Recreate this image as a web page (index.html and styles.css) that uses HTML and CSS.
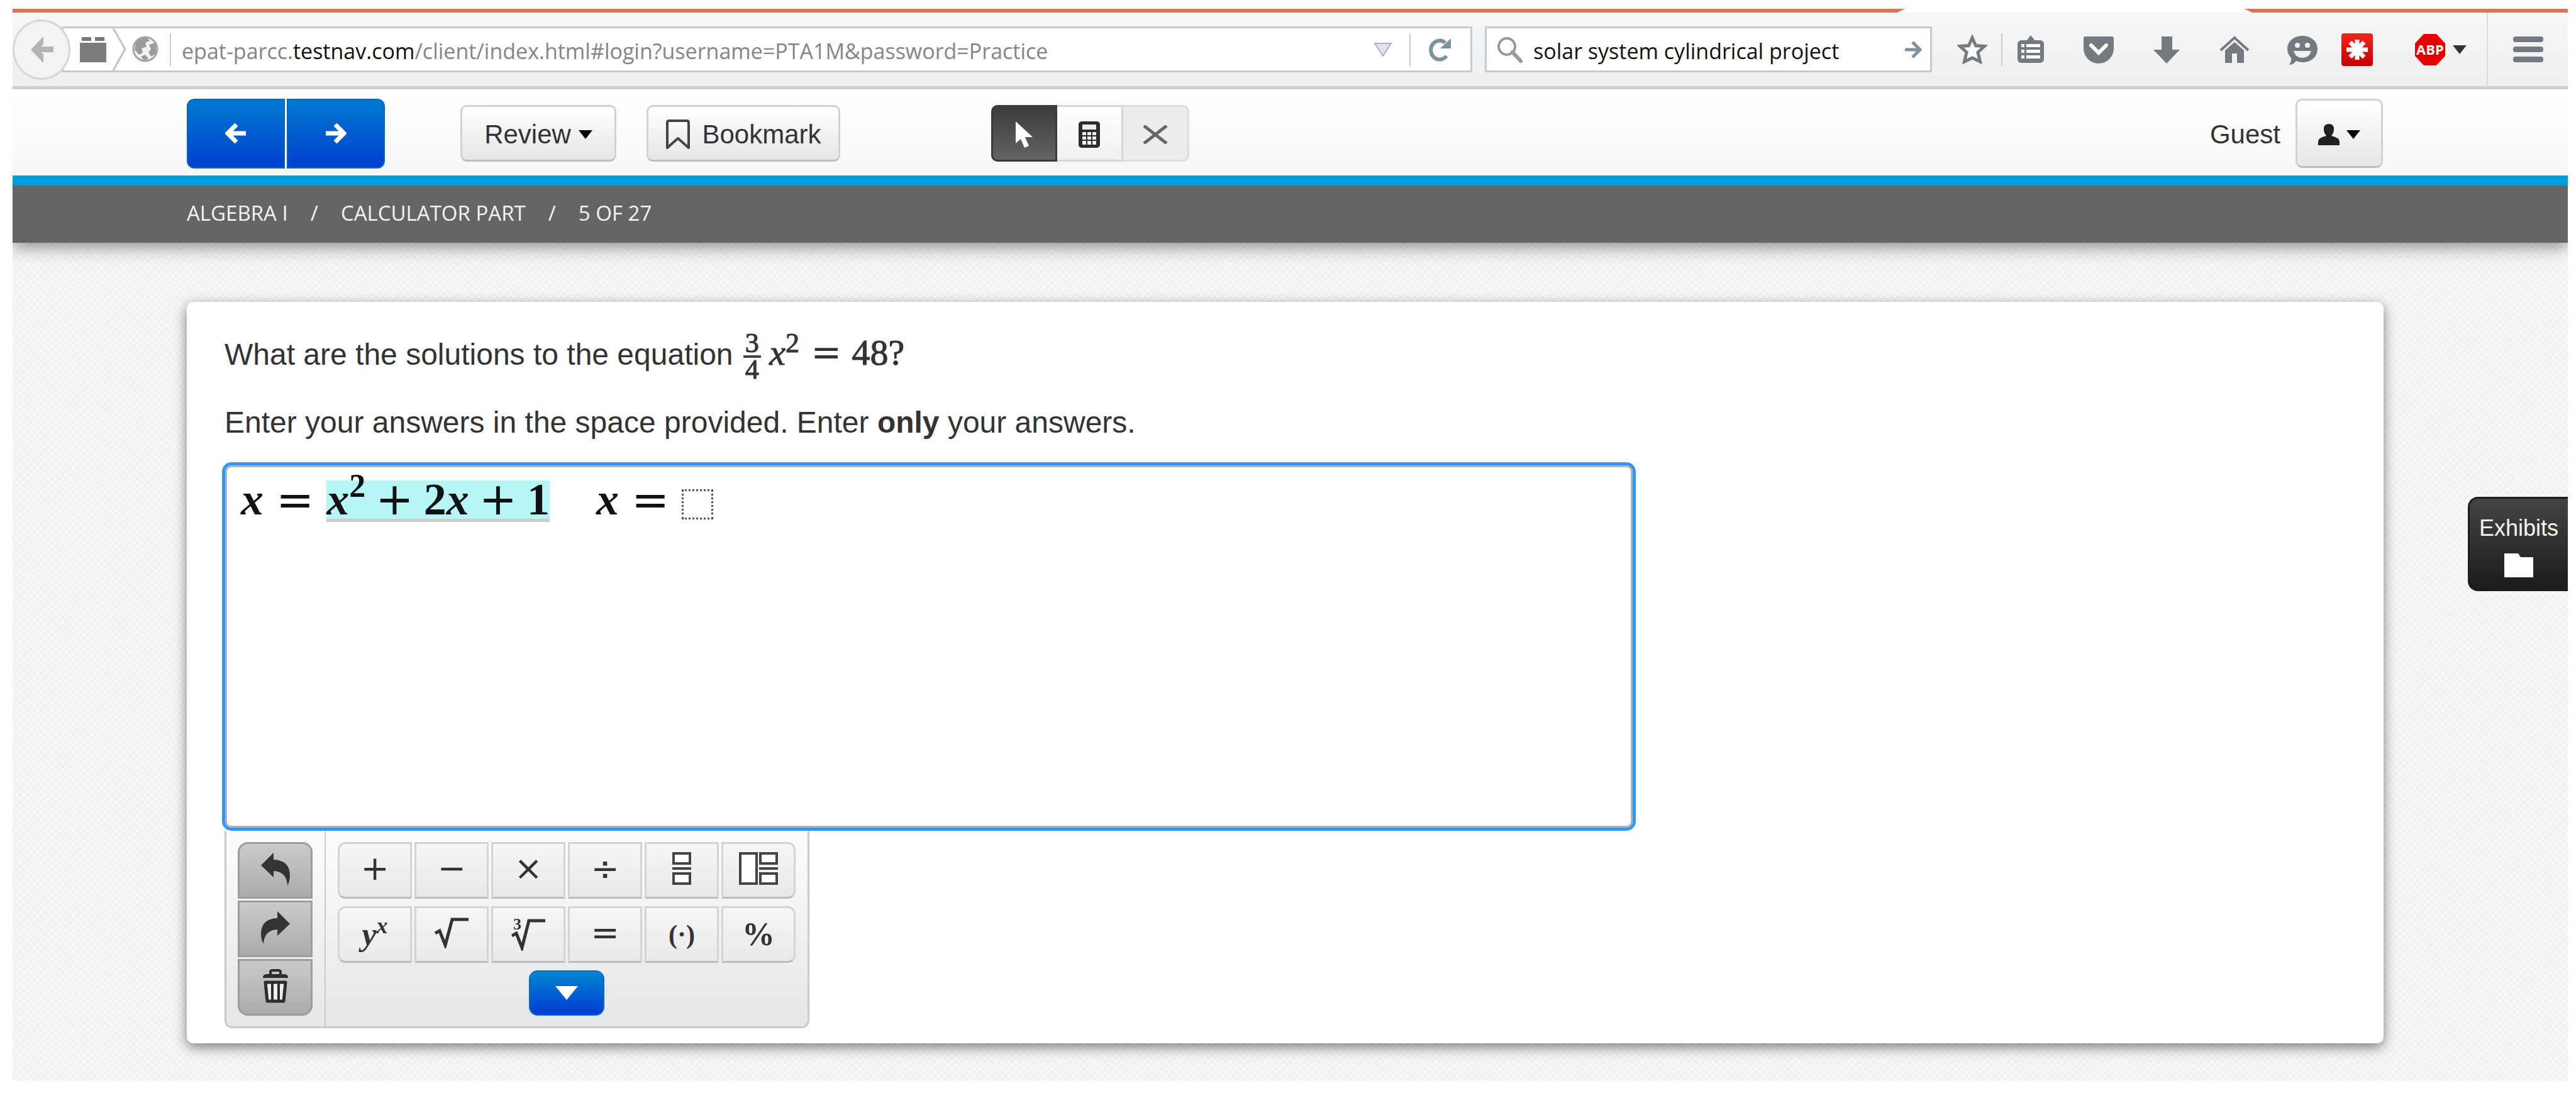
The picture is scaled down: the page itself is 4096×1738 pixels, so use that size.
FILE: index.html
```html
<!DOCTYPE html>
<html lang="en">
<head>
<meta charset="utf-8">
<meta name="viewport" content="width=device-width, initial-scale=1">
<title>Algebra I - Calculator Part</title>
<link rel="stylesheet" href="styles.css">
</head>
<body>
<div class="frame">
  <div class="tabstrip"><span class="tab-edge tab-edge-left"></span><span class="tab-edge tab-edge-right"></span></div>

  <div class="chrome">
    <button class="back" type="button" aria-label="Back">
      <svg width="42" height="46" viewBox="0 0 42 46"><path d="M24 2 L4 23 L24 44 V30 L20 27 H40 V18 H20 L24 15 Z" fill="#b4b4b4"/></svg>
    </button>
    <div class="urlbar">
      <svg class="brick" width="42" height="40" viewBox="0 0 42 40"><path d="M3 0h15v6H3zM24 0h15v6H24z" fill="#777"/><path d="M0 9h42v31H0z" fill="#7c7c7c"/></svg>
      <svg class="chevron" width="22" height="67" viewBox="0 0 22 67"><path d="M1 0 L20 33 L1 67" fill="none" stroke="#bfc3c8" stroke-width="3"/></svg>
      <svg class="globe" width="43" height="43" viewBox="0 0 43 43"><circle cx="21" cy="21" r="19" fill="#f2f2f2" stroke="#a4a4a4" stroke-width="3"/><path d="M6 10 Q14 2 24 3 L28 8 L21 11 L23 17 L15 20 L17 27 L11 30 L4 22 Z M27 14 L36 11 Q40 20 37 29 L30 33 L26 26 L30 21 Z M14 33 L21 30 L26 36 L20 40 Z" fill="#9b9b9b"/></svg>
      <span class="rule"></span>
      <div class="url" role="textbox" aria-label="Address" contenteditable="true" spellcheck="false">epat-parcc.<span class="domain">testnav.com</span>/client/index.html#login?username=PTA1M&amp;password=Practice</div>
      <svg class="history" width="30" height="22" viewBox="0 0 30 22"><path d="M2 1h26L15 21z" fill="#dde4ea" stroke="#aab4be" stroke-width="2"/></svg>
      <span class="rule"></span>
      <button class="bare reload" type="button" aria-label="Reload">
        <svg width="36" height="38" viewBox="0 0 36 38"><path d="M28 29 A14 15 0 1 1 26 8" fill="none" stroke="#7d929f" stroke-width="6"/><path d="M35 1 V17 H18 Z" fill="#7d929f"/></svg>
      </button>
    </div>
    <form class="search">
      <label for="q"><svg width="42" height="42" viewBox="0 0 42 42"><circle cx="16" cy="16" r="13" fill="none" stroke="#999" stroke-width="4"/><path d="M25 25 L38 39" stroke="#999" stroke-width="6" stroke-linecap="round"/></svg></label>
      <input id="q" type="text" aria-label="Search" value="solar system cylindrical project">
      <button class="bare" type="button" aria-label="Go"><svg width="28" height="30" viewBox="0 0 28 30"><path d="M0 15 H22 M12 3 L24 15 L12 27" fill="none" stroke="#7d929f" stroke-width="5"/></svg></button>
    </form>

    <button class="bare star" type="button" aria-label="Bookmark page"><svg width="48" height="48" viewBox="0 0 48 48"><path d="M24 5 L29.500 17.500 L43.500 18.500 L33 28 L36.500 43 L24 37 L11.500 43 L15 28 L4.500 18.500 L18.500 17.500 Z" fill="#fbfbfb" stroke="#747a80" stroke-width="5"/></svg></button>
    <span class="rule rule-star"></span>
    <div class="tools">
      <button class="bare" type="button" aria-label="Bookmarks list"><svg width="48" height="48" viewBox="0 0 48 48"><path d="M17 10 L24 1 L31 10 Z" fill="#747a80"/><rect x="3" y="9" width="42" height="36" rx="6" fill="#747a80"/><path d="M9 15h5v5H9zM17 15h22v5H17zM9 24h5v5H9zM17 24h22v5H17zM9 33h5v5H9zM17 33h22v5H17z" fill="#fff"/></svg></button>
      <button class="bare" type="button" aria-label="Pocket"><svg width="48" height="48" viewBox="0 0 48 48"><path d="M3 3 H45 Q48 3 48 6 V22 A24 24 0 0 1 0 22 V6 Q0 3 3 3 Z" fill="#747a80"/><path d="M12 17 L24 29 L36 17" fill="none" stroke="#fff" stroke-width="6" stroke-linecap="round"/></svg></button>
      <button class="bare" type="button" aria-label="Downloads"><svg width="48" height="48" viewBox="0 0 48 48"><path d="M16 3 H33 V24 H45 L24 46 L3 24 H16 Z" fill="#747a80"/></svg></button>
      <button class="bare" type="button" aria-label="Home"><svg width="48" height="48" viewBox="0 0 48 48"><path d="M2 25 L24 5 L46 25" fill="none" stroke="#747a80" stroke-width="4"/><path d="M9 25 L24 12 L39 25 V45 H28 V30 H20 V45 H9 Z" fill="#747a80"/></svg></button>
      <button class="bare" type="button" aria-label="Hello"><svg width="48" height="48" viewBox="0 0 48 48"><path d="M24 2 C38 2 48 11 48 23 C48 35 38 44 25 44 C21 44 17 43 14 42 Q9 48 3 48 Q7 43 6 37 C2 33 0 28 0 23 C0 11 10 2 24 2 Z" fill="#747a80"/><circle cx="16" cy="17" r="4" fill="#f2f2f2"/><circle cx="32" cy="17" r="4" fill="#f2f2f2"/><path d="M10 26 H38 Q35 37 24 37 Q13 37 10 26 Z" fill="#f2f2f2"/></svg></button>
    </div>
    <button class="bare lastpass" type="button" aria-label="Password manager"><svg width="50" height="52" viewBox="0 0 50 52"><defs><linearGradient id="lp" x1="0" y1="0" x2="0" y2="1"><stop offset="0" stop-color="#f4241c"/><stop offset="1" stop-color="#c60000"/></linearGradient></defs><rect width="50" height="52" rx="4" fill="url(#lp)"/><path d="M25 26 V10 M25 26 V42 M25 26 H8 M25 26 H42 M25 26 L14 14 M25 26 L36 14 M25 26 L14 38 M25 26 L36 38" fill="none" stroke="#fff" stroke-width="7"/></svg></button>
    <button class="bare adblock" type="button" aria-label="Adblock">
      <svg width="48" height="50" viewBox="0 0 48 50"><path d="M14 0 H34 L48 15 V35 L34 50 H14 L0 35 V15 Z" fill="#e60000"/><text x="24" y="33" text-anchor="middle" class="abp">ABP</text></svg>
      <svg width="22" height="14" viewBox="0 0 22 14"><path d="M0 0h22L11 14z" fill="#333"/></svg>
    </button>
    <span class="rule rule-menu"></span>
    <button class="bare menu" type="button" aria-label="Menu"><svg width="48" height="42" viewBox="0 0 48 42"><rect width="48" height="9" rx="4" fill="#747a80"/><rect y="16" width="48" height="9" rx="4" fill="#747a80"/><rect y="32" width="48" height="9" rx="4" fill="#747a80"/></svg></button>
  </div>

  <header class="header">
    <div class="nav">
      <button type="button" aria-label="Previous"><svg width="34" height="32" viewBox="0 0 34 32"><path d="M33 16 H6 M18 2 L4 16 L18 30" fill="none" stroke="#fff" stroke-width="7"/></svg></button>
      <button type="button" aria-label="Next"><svg width="34" height="32" viewBox="0 0 34 32"><path d="M1 16 H28 M16 2 L30 16 L16 30" fill="none" stroke="#fff" stroke-width="7"/></svg></button>
    </div>
    <button class="btn review" type="button">Review <svg width="22" height="14" viewBox="0 0 22 14"><path d="M0 0h22L11 14z" fill="#000"/></svg></button>
    <button class="btn bookmark" type="button"><svg width="40" height="50" viewBox="0 0 40 50"><path d="M3 46 V6 Q3 3 6 3 H34 Q37 3 37 6 V46 L20 31 Z" fill="none" stroke="#444" stroke-width="4" stroke-linejoin="round"/></svg>Bookmark</button>
    <div class="toolset">
      <button class="on" type="button" aria-label="Pointer"><svg width="30" height="44" viewBox="0 0 30 44"><path d="M1 1 V36 L9 29 L15 43 L22 40 L16 26 H28 Z" fill="#fff"/></svg></button>
      <button type="button" aria-label="Calculator"><svg width="34" height="42" viewBox="0 0 34 42"><rect width="34" height="42" rx="5" fill="#2b2b2b"/><path d="M6 5h22v8H6zM6 17h6v5H6zM14 17h6v5H14zM22 17h6v5H22zM6 24h6v5H6zM14 24h6v5H14zM22 24h6v5H22zM6 31h6v6H6zM14 31h6v6H14zM22 31h6v6H22z" fill="#eee"/></svg></button>
      <button class="off" type="button" aria-label="Answer eliminator"><svg width="40" height="30" viewBox="0 0 40 30"><path d="M2 1 L38 29 M38 1 L2 29" stroke="#666" stroke-width="5"/></svg></button>
    </div>
    <span class="guest">Guest</span>
    <button class="btn user" type="button" aria-label="Account">
      <svg width="34" height="34" viewBox="0 0 34 34"><path d="M17 0 Q26 0 25 10 Q24 16 21 19 Q34 22 34 28 V34 H0 V28 Q0 22 13 19 Q10 16 9 10 Q8 0 17 0 Z" fill="#222"/></svg>
      <svg width="22" height="14" viewBox="0 0 22 14"><path d="M0 0h22L11 14z" fill="#000"/></svg>
    </button>
  </header>

  <nav class="crumbs" aria-label="Progress"><span>ALGEBRA I</span><span>/</span><span>CALCULATOR PART</span><span>/</span><span>5 OF 27</span></nav>

  <main class="workspace">
    <section class="card">
      <p class="question">What are the solutions to the equation <span class="frac"><span>3</span><span>4</span></span> <span class="math"><i>x</i><sup>2</sup> <span class="op">=</span> 48?</span></p>
      <p class="hint">Enter your answers in the space provided. Enter <b>only</b> your answers.</p>
      <div class="answer" role="textbox" aria-label="Answer" tabindex="0"><i>x</i><span class="op">=</span><span class="picked"><i>x</i><sup>2</sup><span class="op">+</span>2<i>x</i><span class="op">+</span>1</span><i class="next">x</i><span class="op">=</span><span class="slot"></span></div>
      <div class="keypad">
        <div class="edit">
          <button type="button" aria-label="Undo"><svg width="46" height="52" viewBox="0 0 46 52"><path d="M20 0 V11 Q46 12 46 36 Q46 45 42 52 Q41 30 20 29 V39 L0 20 Z" fill="#333"/></svg></button>
          <button type="button" aria-label="Redo"><svg width="46" height="52" viewBox="0 0 46 52"><path d="M26 0 V11 Q0 12 0 36 Q0 45 4 52 Q5 30 26 29 V39 L46 20 Z" fill="#333"/></svg></button>
          <button type="button" aria-label="Delete"><svg width="42" height="54" viewBox="0 0 42 54"><path d="M13 8 V5 Q13 2 16 2 H26 Q29 2 29 5 V8" fill="none" stroke="#2d2d2d" stroke-width="4"/><path d="M1 14 Q1 8 7 8 H35 Q41 8 41 14 Z" fill="#2d2d2d"/><path d="M5 21 H37 L34 51 H8 Z" fill="#eee" stroke="#2d2d2d" stroke-width="5" stroke-linejoin="round"/><path d="M16 22 V50 M26 22 V50" stroke="#2d2d2d" stroke-width="4"/></svg></button>
        </div>
        <div class="keys">
          <div class="row">
            <button type="button">+</button><button type="button">−</button><button type="button">×</button><button type="button">÷</button>
            <button type="button" aria-label="Fraction"><svg width="30" height="52" viewBox="0 0 30 52"><path d="M2 2h26v16H2zM2 34h26v16H2z" fill="#fff" stroke="#444" stroke-width="4"/><path d="M0 24h30v4H0z" fill="#444"/></svg></button>
            <button type="button" aria-label="Mixed number"><svg width="62" height="52" viewBox="0 0 62 52"><path d="M2 2h26v48H2zM34 2h26v16H34zM34 34h26v16H34z" fill="#fff" stroke="#444" stroke-width="4"/><path d="M32 24h30v4H32z" fill="#444"/></svg></button>
          </div>
          <div class="row">
            <button class="serif power" type="button"><i>y</i><sup><i>x</i></sup></button>
            <button type="button" aria-label="Square root"><svg width="54" height="50" viewBox="0 0 54 50"><path d="M1 26 L8 22 L17 45 L28 4 H54" fill="none" stroke="#333" stroke-width="5"/></svg></button>
            <button type="button" aria-label="Cube root"><svg width="54" height="58" viewBox="0 0 54 58"><path d="M1 34 L8 30 L17 53 L28 10 H54" fill="none" stroke="#333" stroke-width="5"/><text x="3" y="24" class="index">3</text></svg></button>
            <button type="button">=</button><button class="serif parens" type="button">(·)</button><button class="serif percent" type="button">%</button>
          </div>
          <button class="more" type="button" aria-label="More symbols"><svg width="36" height="22" viewBox="0 0 36 22"><path d="M0 0h36L18 22z" fill="#fff"/></svg></button>
        </div>
      </div>
    </section>
    <button class="exhibits" type="button">Exhibits<svg width="46" height="38" viewBox="0 0 46 38"><path d="M0 0 H22 L26 6 H46 V38 H0 Z" fill="#fff"/></svg></button>
  </main>
</div>
</body>
</html>
```
FILE: styles.css
```css
* { box-sizing: border-box; }

body {
  margin: 0;
  min-height: 100vh;
  display: flex;
  background: #fff;
  font-family: "Liberation Sans", Arial, sans-serif;
  color: #333;
}

svg { display: block; flex: none; }
button { font: inherit; color: inherit; cursor: pointer; }
p { margin: 0; }
sup { line-height: 0; }

.frame {
  flex: 1;
  display: flex;
  flex-direction: column;
  margin: 14px 13px 20px 20px;
}

/* browser chrome */
.tabstrip { display: flex; gap: 540px; height: 6px; background: #fdfdfd; }
.tab-edge { background: #dd7450; }
.tab-edge-left { flex: 1; clip-path: polygon(0 0, 100% 0, calc(100% - 12px) 100%, 0 100%); }
.tab-edge-right { width: 514px; clip-path: polygon(0 0, 100% 0, 100% 100%, 12px 100%); }

.chrome {
  display: flex;
  align-items: center;
  height: 122px;
  border-bottom: 5px solid #cfcfcf;
  background: linear-gradient(#f7f7f7, #eeeeee);
}

.bare { display: flex; align-items: center; padding: 0; border: 0; background: none; }

.back {
  position: relative;
  z-index: 1;
  display: flex;
  align-items: center;
  justify-content: center;
  width: 92px;
  height: 96px;
  margin-right: -14px;
  padding: 0;
  border: 3px solid #d6d6d6;
  border-radius: 50%;
  background: #f3f3f3;
}

.urlbar, .search {
  display: flex;
  align-items: center;
  height: 73px;
  border: 3px solid #c3ccd4;
  background: #fff;
}
.urlbar { flex: 1; min-width: 0; padding: 0 30px 0 26px; }
.chevron { margin: 0 9px 0 10px; }
.rule { flex: none; width: 2px; height: 52px; background: #c9ced3; }
.globe + .rule { margin: 0 17px; }
.url {
  flex: 1;
  min-width: 0;
  padding-top: 4px;
  overflow: hidden;
  white-space: nowrap;
  font: 34px/60px "Open Sans", "Noto Sans", sans-serif;
  color: #858585;
}
.domain { color: #111; }
.history + .rule { margin: 0 29px 0 27px; }

.search { width: 711px; margin: 0 40px 0 20px; padding: 0 12px 0 16px; }
.search input {
  flex: 1;
  min-width: 0;
  margin-left: 16px;
  padding: 4px 0 0;
  border: 0;
  outline: 0;
  background: none;
  font: 34px/60px "Open Sans", "Noto Sans", sans-serif;
  color: #111;
}

.rule-star { margin: 0 21px 0 22px; }
.tools { display: flex; gap: 60px; }
.lastpass { margin: 0 67px 0 38px; }
.adblock { gap: 12px; }
.abp { font: bold 22px "Open Sans", sans-serif; fill: #fff; }
.rule-menu { height: 100%; margin: 0 40px 0 32px; background: #dcdcdc; }
.menu { margin-right: 39px; }

/* test header */
.header {
  display: flex;
  align-items: center;
  height: 153px;
  padding: 3px 294px 0 277px;
  border-bottom: 16px solid #009cde;
  background: linear-gradient(#fff, #f7f7f7);
  font-size: 42px;
}

.nav { display: flex; gap: 3px; }
.nav button {
  display: flex;
  align-items: center;
  justify-content: center;
  width: 156px;
  height: 111px;
  border: 2px solid #0067c0;
  background: linear-gradient(#007ad0, #003fd0);
}
.nav button:first-child { border-radius: 12px 0 0 12px; }
.nav button:last-child { border-radius: 0 12px 12px 0; }

.btn {
  display: flex;
  align-items: center;
  justify-content: center;
  height: 90px;
  padding: 4px 0 0;
  border: 3px solid #d2d2d2;
  border-bottom-color: #bdbdbd;
  border-radius: 10px;
  background: linear-gradient(#fff, #e6e6e6);
}
.review { width: 248px; margin-left: 120px; gap: 12px; }
.bookmark { width: 308px; margin-left: 48px; gap: 18px; }

.toolset { display: flex; height: 90px; margin-left: 240px; }
.toolset button {
  display: flex;
  align-items: center;
  justify-content: center;
  width: 105px;
  padding: 4px 0 0;
  border: 3px solid #d6d6d6;
  border-left: 0;
  background: linear-gradient(#fff, #f0f0f0);
}
.toolset .on { border: 3px solid #3a3a3a; border-radius: 10px 0 0 10px; background: linear-gradient(#3c3c3c, #646464); }
.toolset .off { border-color: #dedede; border-radius: 0 10px 10px 0; background: #ececec; }

.guest { margin-left: auto; padding-top: 4px; }
.user { width: 139px; height: 110px; margin-left: 24px; gap: 11px; }

.crumbs {
  position: relative;
  z-index: 1;
  display: flex;
  align-items: center;
  gap: 36px;
  height: 91px;
  padding: 0 0 4px 277px;
  background: #656565;
  box-shadow: 0 6px 26px rgba(0, 0, 0, .45);
  clip-path: inset(0 0 -50px 0);
  font: 33px/46px "Open Sans", "Noto Sans", sans-serif;
  color: #f4f4f4;
}

/* item area */
.workspace {
  position: relative;
  flex: 1;
  padding: 94px 293px 59px 277px;
  background-color: #f7f7f7;
  background-image:
    repeating-linear-gradient(45deg, rgba(0, 0, 0, .016) 0 3px, transparent 3px 8px),
    repeating-linear-gradient(-45deg, rgba(0, 0, 0, .016) 0 3px, transparent 3px 8px);
}

.card {
  padding: 42px 60px 24px;
  border-radius: 10px;
  background: #fff;
  box-shadow: 0 6px 20px rgba(0, 0, 0, .5);
}

.question, .hint { font-size: 48px; }
.question { height: 108px; line-height: 84px; white-space: nowrap; }
.hint { height: 110px; line-height: 84px; }

.math, .frac { font-family: "Liberation Serif", "Times New Roman", serif; -webkit-text-stroke: 1px; }
.math { font-size: 58px; line-height: 0; }
.math sup { font-size: 44px; vertical-align: 20px; }
.op { font-family: "DejaVu Sans", sans-serif; -webkit-text-stroke: 0; line-height: 0; }
.math .op { margin: 0 2px 0 4px; }
.frac {
  display: inline-flex;
  flex-direction: column;
  vertical-align: middle;
  margin-left: 3px;
  font-size: 44px;
  line-height: 38px;
  text-align: center;
}
.frac span { width: 28px; }
.frac span:first-child { border-bottom: 4px solid #444; }

.answer {
  display: flex;
  align-items: flex-start;
  max-width: 2238px;
  height: 576px;
  margin-left: 1px;
  padding: 21px 22px 0;
  border: 3px solid #b5b3b3;
  border-radius: 10px;
  outline: 0;
  box-shadow: 0 0 0 5px #2f97fb;
  font: bold 72px/61px "Liberation Serif", "Times New Roman", serif;
  color: #111;
}
.answer .op { font-size: 72px; line-height: 61px; font-weight: normal; margin: 0 20px; }
.answer sup { font-size: 52px; font-weight: bold; vertical-align: 28px; }
.answer .picked { background: #b6f6f6; border-bottom: 5px solid #cfcaca; white-space: nowrap; }
.answer .picked .op { line-height: 0; margin: 0 16px; }
.next { margin-left: 74px; }
.slot { width: 50px; height: 48px; margin-top: 14px; border: 3px dotted #555; }

.keypad {
  display: inline-flex;
  margin-top: 5px;
  border: 3px solid #cbcbcb;
  border-top: 0;
  border-radius: 0 0 12px 12px;
  background: linear-gradient(#fcfcfc, #e6e6e6);
}
.edit { display: flex; flex-direction: column; gap: 3px; padding: 18px 19px 17px 18px; border-right: 2px solid #cbcbcb; }
.edit button {
  display: flex;
  align-items: center;
  justify-content: center;
  width: 119px;
  height: 90px;
  padding: 0 0 4px;
  border: 3px solid #9c9c9c;
  background: linear-gradient(#cacaca, #ababab);
}
.edit button:first-child { border-radius: 16px 16px 0 0; }
.edit button:last-child { border-radius: 0 0 16px 16px; }

.keys { display: flex; flex-direction: column; align-items: center; gap: 12px; padding: 18px 19px 17px; }
.row { display: flex; gap: 4px; }
.row button {
  display: flex;
  align-items: center;
  justify-content: center;
  width: 118px;
  height: 90px;
  padding: 0 0 6px;
  border: 3px solid #d4d4d4;
  border-bottom-color: #bcbcbc;
  background: linear-gradient(#f6f6f6, #e9e9e9);
  font: 54px/60px "DejaVu Sans", sans-serif;
}
.row button:first-child { border-radius: 12px 0 0 12px; }
.row button:last-child { border-radius: 0 12px 12px 0; }
.row .serif { padding: 0; font: bold 52px/60px "Liberation Serif", "Times New Roman", serif; }
.row .parens { font-size: 42px; }
.power sup { font-size: 36px; margin-bottom: 28px; }
.index { font: bold 26px "Liberation Serif", serif; fill: #333; }

.more {
  display: flex;
  align-items: center;
  justify-content: center;
  width: 120px;
  height: 72px;
  border: 2px solid #006cc4;
  border-radius: 14px;
  background: linear-gradient(#0086d0, #003cd2);
}

.exhibits {
  position: absolute;
  top: 404px;
  right: 0;
  display: flex;
  flex-direction: column;
  align-items: center;
  gap: 19px;
  width: 159px;
  height: 150px;
  padding: 26px 0 0;
  border: 3px solid #1c1c1c;
  border-right: 0;
  border-radius: 16px 0 0 16px;
  background: linear-gradient(#444, #1b1b1b);
  font-size: 36px;
  line-height: 42px;
  color: #f4f4f4;
}
```
